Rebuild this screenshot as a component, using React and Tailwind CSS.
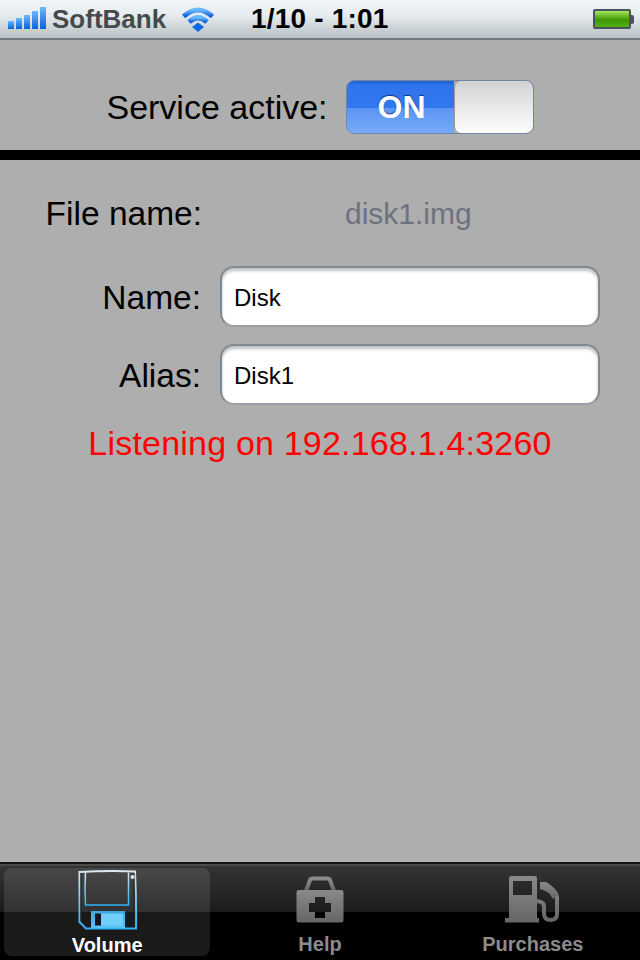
const SignalBars = () => (
  <svg width="38" height="24" viewBox="0 0 38 24">
    <defs>
      <linearGradient id="sig" x1="0" y1="0" x2="0" y2="1">
        <stop offset="0" stopColor="#6db9fc" />
        <stop offset="1" stopColor="#0a5fe0" />
      </linearGradient>
    </defs>
    <rect x="0" y="14" width="6" height="8" fill="url(#sig)" />
    <rect x="8" y="11" width="6" height="11" fill="url(#sig)" />
    <rect x="16" y="8" width="6" height="14" fill="url(#sig)" />
    <rect x="24" y="4" width="6" height="18" fill="url(#sig)" />
    <rect x="32" y="0" width="6" height="22" fill="url(#sig)" />
  </svg>
);

const WifiIcon = () => (
  <svg width="32" height="25" viewBox="0 0 32 25" fill="none">
    <defs>
      <linearGradient id="wifi" x1="0" y1="0" x2="0" y2="1">
        <stop offset="0" stopColor="#6db9fc" />
        <stop offset="1" stopColor="#0a5fe0" />
      </linearGradient>
    </defs>
    <path d="M1.500 9.500 Q16 -3.500 30.500 9.500" stroke="url(#wifi)" strokeWidth="5" />
    <path d="M7 15 Q16 6.500 25 15" stroke="url(#wifi)" strokeWidth="5" />
    <path d="M16 15.500 L22 20 L16 25 L10 20 Z" fill="#0f68e6" />
  </svg>
);

const Battery = () => (
  <div className="flex items-center">
    <div className="w-[38px] h-[20px] border-2 border-[#4a5160] rounded-[2px] bg-[linear-gradient(#a6e65a,#3f9a06_55%,#4fae10)]" />
    <div className="w-[3px] h-[9px] bg-[#4a5160] rounded-r-[2px]" />
  </div>
);

const FloppyIcon = () => (
  <svg width="60" height="60" viewBox="0 0 60 60" fill="none" className="ml-[2px]">
    <defs>
      <linearGradient id="floppy" x1="0" y1="0" x2="0" y2="1">
        <stop offset="0" stopColor="#dbe8f0" />
        <stop offset="0.5" stopColor="#7fc4ea" />
        <stop offset="1" stopColor="#2fb2f5" />
      </linearGradient>
      <linearGradient id="floppyFill" x1="0" y1="0" x2="0" y2="1">
        <stop offset="0" stopColor="#3aa5de" />
        <stop offset="1" stopColor="#56c6fa" />
      </linearGradient>
    </defs>
    {/* rough pen look: outline drawn twice, slightly off */}
    <path d="M1.500 2 Q30 0.500 57 1.500 Q58.500 30 58 58.500 H8 L1.500 52 Z" stroke="url(#floppy)" strokeWidth="2" />
    <path d="M3 3 V51 M56 3 V57" stroke="#17232b" strokeWidth="1.500" opacity="0.7" />
    <path d="M7.500 2.500 Q6.500 20 7.500 35 H50.500 V2.500" stroke="url(#floppy)" strokeWidth="1.500" />
    <circle cx="54.500" cy="7" r="2" fill="#dfe9ef" />
    <rect x="13" y="41" width="34" height="17" fill="url(#floppyFill)" />
    <rect x="17" y="43.500" width="6" height="12" fill="#10191f" />
    <rect x="23" y="43.500" width="22" height="12" fill="#6fcff8" />
  </svg>
);

const HelpIcon = () => (
  <svg width="48" height="48" viewBox="0 0 48 48" fill="none">
    <defs>
      <linearGradient id="kit" x1="0" y1="0" x2="0" y2="1">
        <stop offset="0" stopColor="#8a8a8a" />
        <stop offset="1" stopColor="#666" />
      </linearGradient>
    </defs>
    <path d="M10 16 L14 5 Q14.500 3.500 17 3.500 H31 Q33.500 3.500 34 5 L38 16" stroke="url(#kit)" strokeWidth="4" />
    <path d="M3 15 H45 Q47.500 15 47.500 17.500 V45 Q47.500 47.500 45 47.500 H3 Q0.500 47.500 0.500 45 V17.500 Q0.500 15 3 15 Z M19 22 V28 H13 V37 H19 V43 H29 V37 H35 V28 H29 V22 Z" fill="url(#kit)" fillRule="evenodd" />
  </svg>
);

const PumpIcon = () => (
  <svg width="56" height="48" viewBox="0 0 56 48" fill="none">
    <defs>
      <linearGradient id="pump" x1="0" y1="0" x2="0" y2="1">
        <stop offset="0" stopColor="#8a8a8a" />
        <stop offset="1" stopColor="#666" />
      </linearGradient>
    </defs>
    <path d="M4 3 Q4 1 7 1 H29 Q32 1 32 3 V43 H34 V47.500 H0 V43 H4 Z M8 6 V20 H27 V6 Z" fill="url(#pump)" fillRule="evenodd" />
    <path d="M37 10 Q50 13 52 22 V39 Q52 45 45.500 45 Q39 45 39 38 V31 Q39 27 32 26" stroke="url(#pump)" strokeWidth="4" />
    <path d="M35 7 L41 7 Q50 12 54 20 L48 24 Q44 16 35 14 Z" fill="url(#pump)" />
  </svg>
);

const TextBox = ({ value }) => (
  <div className="flex-1 h-[61px] bg-white rounded-[14px] border-2 border-[#808890] border-b-[#9aa0a5] shadow-[inset_0_3px_3px_rgba(70,80,95,0.35)] flex items-center pl-[12px] pt-[2px] text-[24px] text-black">
    {value}
  </div>
);

const Tab = ({ label, active, children }) => (
  <div className={`flex-1 flex flex-col items-center rounded-lg ${active ? 'bg-white/10' : ''}`}>
    <div className="h-[62px] flex items-start pt-[2px]">{children}</div>
    <span className={`mt-[3px] text-[20px] leading-[24px] font-bold ${active ? 'text-white' : 'text-[#8b8b8b]'}`}>{label}</span>
  </div>
);

export default function App() {
  return (
    <div className="w-[640px] h-[960px] flex flex-col bg-[#aeaeae] font-['Liberation_Sans',sans-serif] overflow-hidden">
      {/* status bar */}
      <div className="h-[40px] flex items-center px-[8px] border-b-2 border-[#6f767d] bg-[linear-gradient(#f1f5f8,#e6ecef_40%,#b9c1c5)]">
        <SignalBars />
        <span className="ml-[6px] text-[26px] font-bold text-[#454a4d] leading-none w-[130px]">SoftBank</span>
        <WifiIcon />
        <span className="ml-[37px] text-[28px] tracking-[0.2px] font-bold text-black leading-none">1/10 - 1:01</span>
        <div className="ml-auto -mr-[2px]">
          <Battery />
        </div>
      </div>

      {/* service toggle */}
      <div className="h-[110px] flex items-center justify-center gap-[18px] pt-[24px] text-[34px] leading-none text-black">
        <span>Service active:</span>
        <div className="w-[188px] h-[54px] flex rounded-[8px] overflow-hidden border border-[#6f86a6]">
          <div className="w-[107px] pl-[3px] flex items-center justify-center text-white font-bold text-[32px] [text-shadow:0_-1px_1px_rgba(0,20,80,0.7)] bg-[linear-gradient(#1f5dc8,#2f74ee_8%,#3277ee_52%,#5a94f3_52%,#78aaf9)]">
            ON
          </div>
          <div className="flex-1 rounded-[7px] bg-[linear-gradient(#d2d2d2,#fefefe)] border-l border-[#9a9a9a]" />
        </div>
      </div>
      <div className="h-[10px] bg-black" />

      {/* form */}
      <div className="flex-1 flex flex-col pl-[20px]">
        <div className="mt-[34px] flex items-center h-[40px]">
          <span className="w-[182px] text-right text-[33.500px] leading-none text-black">File name:</span>
          <span className="ml-[143px] text-[30px] leading-none text-[#6d7280]">disk1.img</span>
        </div>
        <div className="mt-[32px] flex items-center gap-[19px] pr-[40px]">
          <span className="w-[181px] text-right text-[33.500px] leading-none text-black mt-[3px]">Name:</span>
          <TextBox value="Disk" />
        </div>
        <div className="mt-[17px] flex items-center gap-[19px] pr-[40px]">
          <span className="w-[181px] text-right text-[33.500px] leading-none text-black mt-[3px]">Alias:</span>
          <TextBox value="Disk1" />
        </div>
        <div className="mt-[18px] pr-[20px] text-center text-[34px] tracking-[0.2px] leading-[40px] text-[#fe0000]">
          Listening on 192.168.1.4:3260
        </div>
      </div>

      {/* tab bar */}
      <div className="h-[98px] flex gap-[6.500px] px-[4px] pt-[4px] pb-[4px] border-t-2 border-[#111] shadow-[inset_0_2px_0_#4a4a4a] bg-[linear-gradient(#353535,#1b1b1b_50%,#000_50%)]">
        <Tab label="Volume" active>
          <FloppyIcon />
        </Tab>
        <Tab label="Help">
          <div className="mt-[5px]">
            <HelpIcon />
          </div>
        </Tab>
        <Tab label="Purchases">
          <div className="mt-[5px]">
            <PumpIcon />
          </div>
        </Tab>
      </div>
    </div>
  );
}
